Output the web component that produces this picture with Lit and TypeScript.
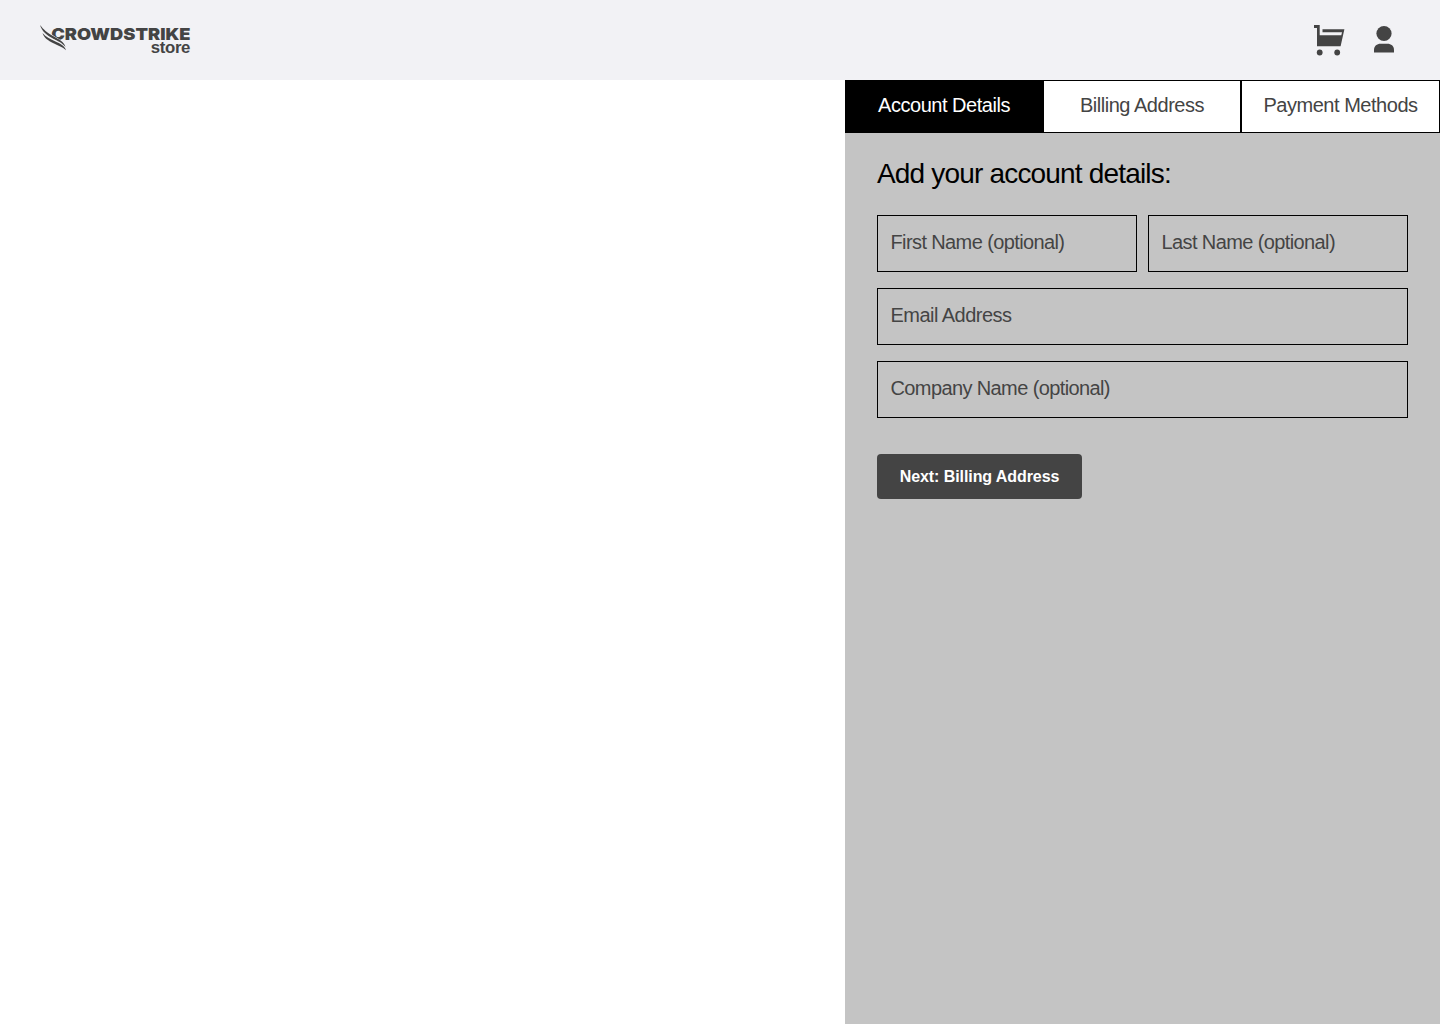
import { LitElement, html, css } from "lit";
import { customElement, state } from "lit/decorators.js";

@customElement("store-header")
export class StoreHeader extends LitElement {
  static styles = css`
    :host {
      display: flex;
      align-items: center;
      justify-content: space-between;
      height: 80px;
      padding: 0 40px;
      box-sizing: border-box;
      background: #f2f2f5;
      color: #444;
    }
    .logo {
      display: block;
      fill: #444;
    }
    .brand {
      font: 900 16.6px Inter, sans-serif;
    }
    .cut {
      fill: none;
      stroke: #f2f2f5;
      stroke-width: 1.2px;
    }
    .sub {
      font: 700 16.8px "Liberation Sans", Arial, sans-serif;
    }
    .actions {
      display: flex;
      gap: 18px;
    }
    .action {
      display: block;
      padding: 0;
      border: 0;
      background: none;
    }
    .icon {
      display: block;
      fill: #444;
    }
  `;

  render() {
    return html`
      <svg class="logo" width="152" height="32" viewBox="0 0 152 32" role="img">
        <text class="brand" x="11.200" y="15.800" textLength="139.300" lengthAdjust="spacingAndGlyphs">CROWDSTRIKE</text>
        <path class="cut" d="M8 8.500C12 12 16 13.500 20 16.500" />
        <path d="M0 1C3.500 5.500 7 8.500 13 12C19 15.500 24 17.500 25.500 23C22 18.500 18 17.500 12.500 14.300C6.500 11 2 7.500 0 1Z" />
        <path d="M2.500 9C6 13 10 14.800 15 17.200C20.500 19.800 24.500 21.500 26 26.200C22.500 22.700 18.500 21.700 13.500 19.200C8 16.500 4 14 2.500 9Z" />
        <text class="sub" x="110.800" y="28.500" textLength="39.600" lengthAdjust="spacing">store</text>
      </svg>
      <div class="actions">
        <button class="action" aria-label="Cart">
          <svg class="icon" width="40" height="40" viewBox="0 0 40 40">
            <path d="M4 5H9.700V15.300H31.300L32 12.300H12.500V9.300H34.400L30.600 26.300H7V8H4Z" />
            <circle cx="9.700" cy="32.500" r="2.900" />
            <circle cx="27.200" cy="32.500" r="2.900" />
          </svg>
        </button>
        <button class="action" aria-label="Profile">
          <svg class="icon" width="32" height="40" viewBox="0 0 32 40">
            <circle cx="16" cy="13.500" r="7.600" />
            <path d="M6 32.500V30C6 26 9 23.800 12.500 23.800H19.500C23 23.800 26 26 26 30V32.500Z" />
          </svg>
        </button>
      </div>
    `;
  }
}

@customElement("app-root")
export class AppRoot extends LitElement {
  static styles = css`
    :host {
      display: flex;
      flex-direction: column;
      height: 100vh;
      background: #fff;
      font-family: "Liberation Sans", Arial, sans-serif;
    }
    .body {
      display: flex;
      justify-content: flex-end;
      flex: 1;
    }
    .panel {
      width: 595px;
      background: #c4c4c4;
    }
    .tabs {
      display: grid;
      grid-template-columns: 198px 198px 1fr;
      height: 53px;
    }
    .tab {
      border: 1px solid #000;
      border-radius: 0;
      padding: 0 0 3px;
      background: #fff;
      color: #444;
      font: 20px "Liberation Sans", Arial, sans-serif;
      letter-spacing: -0.47px;
      white-space: nowrap;
    }
    .tab.active {
      background: #000;
      color: #fff;
    }
    .form {
      display: flex;
      flex-direction: column;
      align-items: flex-start;
      padding: 25px 32px;
    }
    .title {
      margin: 0 0 25px;
      font-size: 28px;
      line-height: 32px;
      font-weight: 400;
      letter-spacing: -0.82px;
      color: #000;
    }
    .fields {
      display: grid;
      grid-template-columns: 1fr 1fr;
      gap: 16px 11px;
      width: 100%;
    }
    .field {
      height: 57px;
      min-width: 0;
      box-sizing: border-box;
      border: 1px solid #000;
      border-radius: 0;
      padding: 0 12px 3px 12.5px;
      background: transparent;
      color: #444;
      font: 20px "Liberation Sans", Arial, sans-serif;
      letter-spacing: -0.61px;
      outline: none;
    }
    .field::placeholder {
      color: #444;
      opacity: 1;
    }
    .wide {
      grid-column: span 2;
    }
    .wide.email {
      letter-spacing: -0.53px;
    }
    .next {
      width: 205px;
      height: 45px;
      margin-top: 36px;
      padding: 0;
      border: 0;
      border-radius: 4px;
      background: #444;
      color: #fff;
      font: 700 16px "Liberation Sans", Arial, sans-serif;
      letter-spacing: -0.08px;
      white-space: nowrap;
    }
  `;

  @state() private active = 0;

  private tabs = ["Account Details", "Billing Address", "Payment Methods"];

  render() {
    return html`
      <store-header></store-header>
      <main class="body">
        <section class="panel">
          <nav class="tabs">
            ${this.tabs.map(
              (label, i) => html`<button
                class="tab ${i === this.active ? "active" : ""}"
                @click=${() => (this.active = i)}
              >${label}</button>`
            )}
          </nav>
          <form class="form">
            <h1 class="title">Add your account details:</h1>
            <div class="fields">
              <input class="field" placeholder="First Name (optional)" />
              <input class="field" placeholder="Last Name (optional)" />
              <input class="field wide email" placeholder="Email Address" />
              <input class="field wide" placeholder="Company Name (optional)" />
            </div>
            <button class="next" type="button">Next: Billing Address</button>
          </form>
        </section>
      </main>
    `;
  }
}
